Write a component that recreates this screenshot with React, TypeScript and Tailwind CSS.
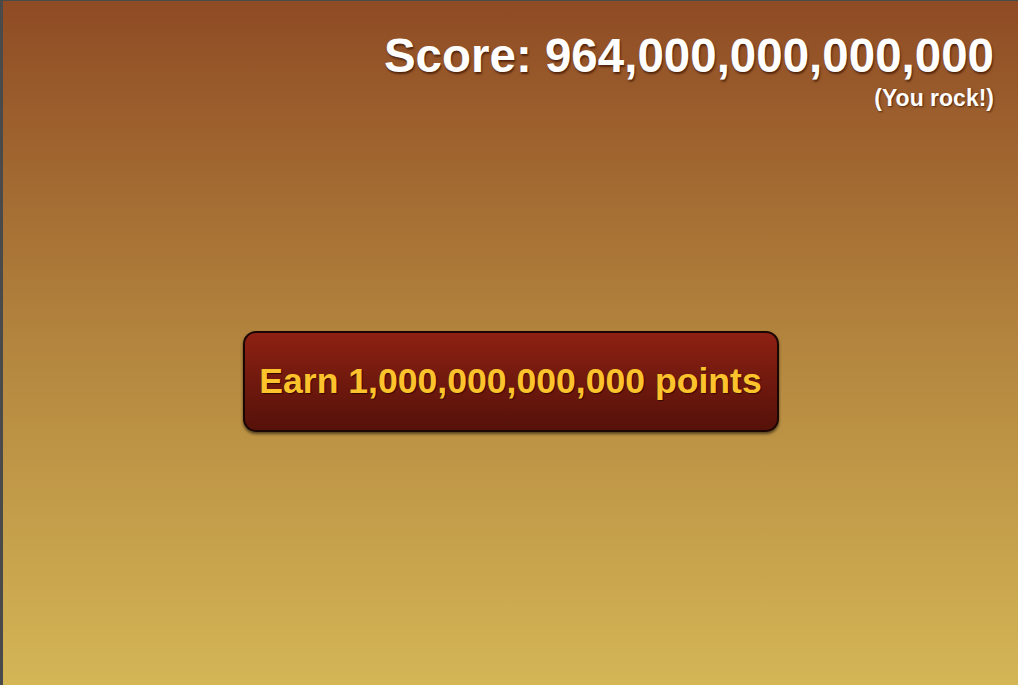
import React from "react";

// Score header + big earn button on a warm gradient

const font = "font-['Liberation_Sans',Arial,sans-serif]";

function ScoreBoard({ score, note }: { score: string; note: string }) {
  return (
    <div className="flex flex-col items-end pr-6 pt-[27px]">
      <div className="text-[47.5px] leading-[56px] font-bold text-white [text-shadow:1px_2px_2px_rgba(60,20,0,0.75)]">
        Score: {score}
      </div>
      <div className="mt-[2px] text-[23px] leading-[24px] font-bold text-white [text-shadow:1px_1px_2px_rgba(60,20,0,0.75)]">
        {note}
      </div>
    </div>
  );
}

function EarnButton({ label }: { label: string }) {
  return (
    <button className="w-[536px] h-[101px] rounded-[13px] border-2 border-[#1a0602] bg-gradient-to-b from-[#8e2113] to-[#551109] text-[35.6px] font-bold text-[#fcc32c] shadow-[0_2px_3px_rgba(0,0,0,0.55)] [text-shadow:1px_1px_1px_rgba(40,5,0,0.8)]">
      {label}
    </button>
  );
}

export default function App() {
  return (
    <div className={`${font} h-[685px] w-[1018px] border-l-[3px] border-t border-[#4a4a4a] bg-gradient-to-b from-[#8f4b24] via-[#b3853e] to-[#d4b656]`}>
      <div className="flex h-full flex-col">
        <ScoreBoard score="964,000,000,000,000" note="(You rock!)" />
        <div className="flex flex-1 items-center justify-center pb-[32px]">
          <EarnButton label="Earn 1,000,000,000,000 points" />
        </div>
      </div>
    </div>
  );
}
